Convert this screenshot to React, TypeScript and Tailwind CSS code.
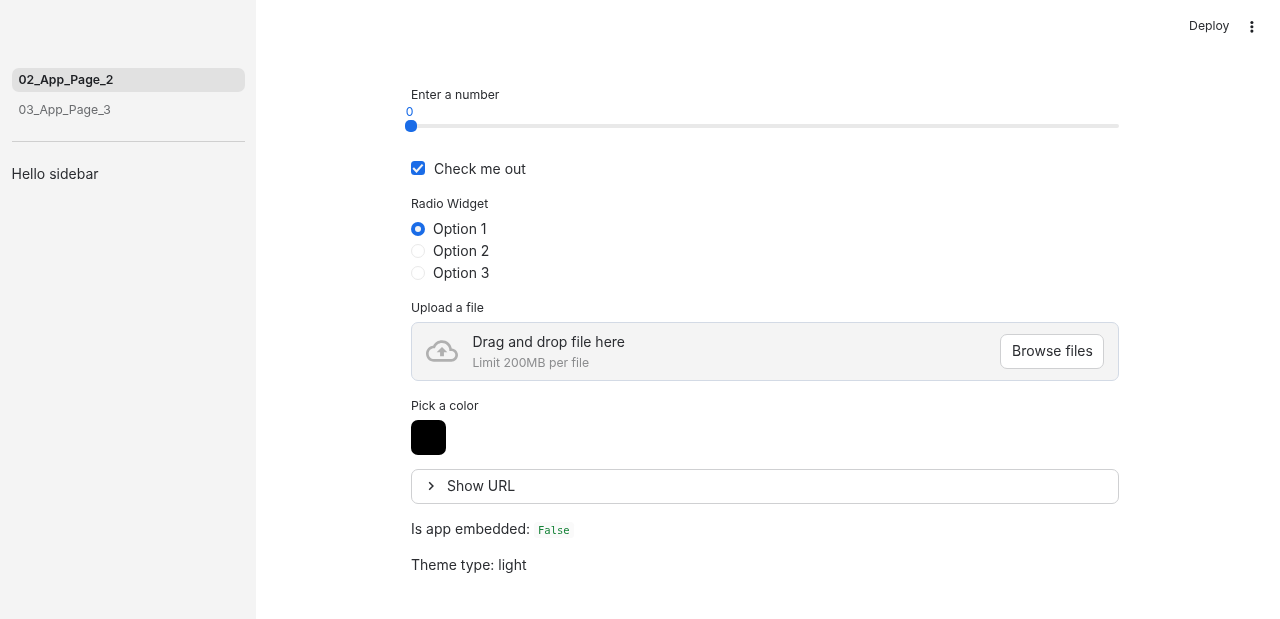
import React from "react";

function Label({ children, className = "" }: { children: React.ReactNode; className?: string }) {
  return <div className={`text-[12.25px] leading-[20px] ${className}`}>{children}</div>;
}

function Radio({ label, checked }: { label: string; checked?: boolean }) {
  return (
    <div className="flex h-[22px] items-center gap-2">
      {checked ? (
        <span className="flex size-[14px] items-center justify-center rounded-full bg-[#1a6ce7]">
          <span className="size-[6px] rounded-full bg-[#f4f4f4]" />
        </span>
      ) : (
        <span className="size-[14px] rounded-full border border-[#e9e9e9] bg-white" />
      )}
      <span>{label}</span>
    </div>
  );
}

export default function App() {
  return (
    <div className="flex h-[619px] w-full overflow-hidden bg-white font-['Inter',sans-serif] text-[14px] leading-[22px] text-[#2b2d31] [will-change:transform]">
      <aside className="w-64 shrink-0 bg-[#f4f4f4] pr-[11.5px] pl-[11.5px] pt-[68px]">
        <nav className="mr-[-0.5px] flex flex-col gap-[6px] text-[12.25px]">
          <a className="flex h-6 items-center rounded-[7px] bg-[#e1e1e1] px-[7px] font-semibold text-[#1e2024]">02_App_Page_2</a>
          <a className="flex h-6 items-center px-[7px] text-[#6a6c6f]">03_App_Page_3</a>
        </nav>
        <hr className="mt-[19px] border-t border-[#cfcfcf]" />
        <p className="mt-[21px]">Hello sidebar</p>
      </aside>

      <div className="flex min-w-0 flex-1 flex-col">
        <header className="flex h-[52px] shrink-0 items-center justify-end gap-[13px] pr-[19.5px] text-[12.25px]">
          <span>Deploy</span>
          <svg viewBox="0 0 18 18" className="mt-[2px] size-[18px]" fill="#1e2024">
            <circle cx="8.9" cy="4.5" r="1.55" />
            <circle cx="8.9" cy="8.8" r="1.55" />
            <circle cx="8.9" cy="13.1" r="1.55" />
          </svg>
        </header>

        <main className="ml-[155px] w-[708px] pt-[33px]">
          <Label>Enter a number</Label>
          <div className="ml-[-6px] w-[9px] text-center text-[12.25px] leading-[14px] text-[#1a6ce7]">0</div>
          <div className="flex h-[14px] items-center">
            <span className="ml-[-6px] size-3 shrink-0 rounded-[5px] bg-[#1a6ce7]" />
            <span className="h-1 flex-1 rounded-r-[4px] bg-[#e9e9e9]" />
          </div>

          <div className="mt-[25px] flex h-[22px] items-center gap-[9px]">
            <span className="mb-[2px] flex size-[14px] items-center justify-center rounded-[3.5px] bg-[#1a6ce7]">
              <svg viewBox="0 0 14 14" className="size-[14px]" fill="none" stroke="#f4f4f4" strokeWidth="2.1">
                <path d="M2.2 7.1 5.5 10.4 11.6 3.6" />
              </svg>
            </span>
            <span>Check me out</span>
          </div>

          <Label className="mt-[14px]">Radio Widget</Label>
          <div className="mt-1">
            <Radio label="Option 1" checked />
            <Radio label="Option 2" />
            <Radio label="Option 3" />
          </div>

          <Label className="mt-[14px]">Upload a file</Label>
          <section className="mt-1 flex h-[59px] items-center rounded-[7px] border border-[#d3dae5] bg-[#f4f4f4] px-[14px]">
            <svg viewBox="0 0 24 24" className="mb-[2px] size-8 shrink-0" fill="#b0b0b0">
              <path d="M19.35 10.04C18.67 6.59 15.64 4 12 4 9.11 4 6.6 5.64 5.35 8.04 2.34 8.36 0 10.91 0 14c0 3.31 2.69 6 6 6h13c2.76 0 5-2.24 5-5 0-2.64-2.05-4.78-4.65-4.96zM19 18H6c-2.21 0-4-1.79-4-4s1.79-4 4-4h.71C7.37 7.69 9.48 6 12 6c3.04 0 5.5 2.46 5.5 5.5v.5H19c1.66 0 3 1.34 3 3s-1.34 3-3 3zM8 13h2.55v3h2.9v-3H16l-4-4z" />
            </svg>
            <div className="ml-[14.4px] flex-1">
              <div className="leading-[22px]">Drag and drop file here</div>
              <div className="text-[12.25px] leading-[20px] text-[#8c8d8f]">Limit 200MB per file</div>
            </div>
            <button className="h-[35px] w-[104px] rounded-[7px] border border-[#cfd0d2] bg-white pb-[2px] pl-px">Browse files</button>
          </section>

          <Label className="mt-[15px]">Pick a color</Label>
          <div className="mt-1 size-[35px] rounded-[7px] bg-black" />

          <div className="mt-[14px] flex h-[35px] items-center rounded-[7px] border border-[#cfd0d2] pb-[1px] pl-[10px]">
            <svg viewBox="0 0 18 18" className="size-[18px]" fill="none" stroke="currentColor" strokeWidth="1.5">
              <path d="m7.2 5.3 3.7 3.7-3.7 3.7" />
            </svg>
            <span className="ml-[7px]">Show URL</span>
          </div>

          <p className="mt-[14px] h-[22px]">
            Is app embedded:{" "}
            <code className="rounded-[3.5px] bg-[#fafafa] px-1 py-[2px] font-['DejaVu_Sans_Mono',monospace] text-[10.5px] text-[#158237]">False</code>
          </p>
          <p className="mt-[14px]">Theme type: light</p>
        </main>
      </div>
    </div>
  );
}
